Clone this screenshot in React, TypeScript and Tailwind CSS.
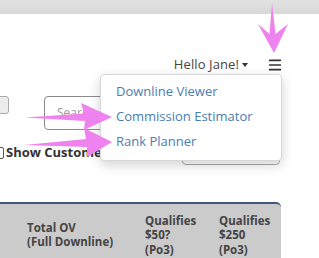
import { Menu } from "lucide-react";

const menuItems = ["Downline Viewer", "Commission Estimator", "Rank Planner"];

export default function App() {
  return (
    <div className="relative h-[258px] w-[319px] overflow-hidden bg-white font-['Open_Sans',sans-serif] text-[#333]">
      <div className="h-[14px] bg-gradient-to-b from-[#e2e2e2] to-[#d8d8d8]" />

      <div className="flex items-center justify-end pr-[36px] pt-[41px]">
        <span className="flex items-center gap-[3px] text-[13px] tracking-[0.1px] text-[#444]">
          Hello Jane!
          <span className="h-0 w-0 border-x-[3.5px] border-t-[4px] border-x-transparent border-t-[#333]" />
        </span>
        <Menu size={16} strokeWidth={2.6} className="ml-[19px] text-[#333]" />
      </div>

      <div className="mt-[21px] flex items-start">
        <div className="-ml-[40px] h-[18px] w-[49px] rounded-[3px] border border-[#aaa] bg-[#ececec]" />
        <div className="ml-[35px] flex h-[34px] w-[120px] items-center rounded-[4px] border border-[#8a8a8a] pl-[12px] text-[12px] text-[#999]">
          Search
        </div>
      </div>

      <div className="mt-[7px] flex items-end">
        <div className="mb-[2px] flex items-center gap-[2px]">
          <span className="-ml-[9px] h-[12px] w-[13px] rounded-[2px] border border-[#555] bg-white" />
          <span className="text-[13px] font-bold text-[#333]">Show Customers</span>
        </div>
        <div className="ml-auto mr-[39px] h-[28px] w-[98px] rounded-[4px] border border-[#aaa] bg-white" />
      </div>

      <div className="mt-[37px] grid h-[60px] w-[281px] grid-cols-[145px_74px_1fr] rounded-tr-[5px] border-t-2 border-[#3e5a7a] bg-[#cbcbcb] text-[11.5px] font-bold leading-[14.5px] text-[#444]">
        <div className="pl-[27px] pt-[17px]">
          Total OV
          <br />
          (Full Downline)
        </div>
        <div className="pt-[10px]">
          Qualifies
          <br />
          $50?
          <br />
          (Po3)
        </div>
        <div className="pt-[10px]">
          Qualifies
          <br />
          $250
          <br />
          (Po3)
        </div>
      </div>

      {/* dropdown over the page */}
      <div className="absolute left-[100px] top-[74px] flex h-[87px] w-[182px] flex-col rounded-[4px] border border-[#d8d8d8] bg-white pt-[4px] shadow-[0_4px_12px_rgba(0,0,0,0.18)]">
        {menuItems.map((item) => (
          <div key={item} className="h-[25px] pl-[15px] text-[13px] leading-[25px] text-[#4a7db3]">
            {item}
          </div>
        ))}
      </div>

      {/* annotation arrows */}
      <svg className="pointer-events-none absolute left-0 top-0" width="319" height="258" viewBox="0 0 319 258">
        <path d="M272,3 L275.5,34 L288,24 L274,53 L258,24 L269.5,34 Z" fill="#ee82ee" />
        <path d="M25,117.5 L84,113.5 L81,103 L112,117 L84,130 L85,121 Z" fill="#ee82ee" />
        <path d="M24,145 L86,139 L84,128 L112,142 L87,157 L87,147 Z" fill="#ee82ee" />
      </svg>
    </div>
  );
}
